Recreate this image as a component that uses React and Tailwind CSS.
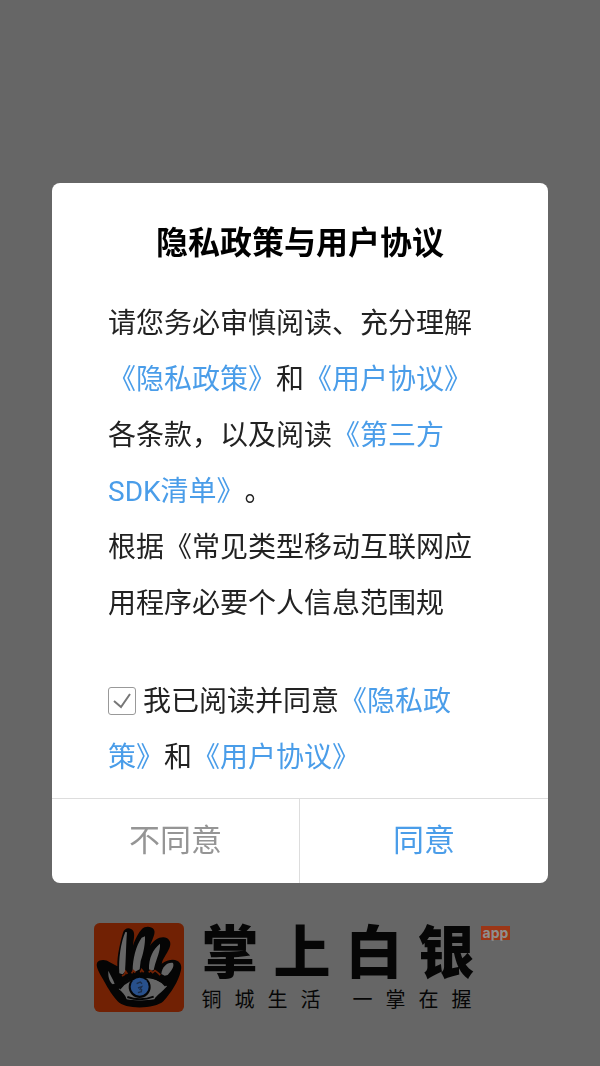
const cjk = "font-['Roboto','Noto_Sans_CJK_SC',sans-serif]";

function DocLink({ children }) {
  return (
    <a href="#" className="text-[#4a9de9]">
      {children}
    </a>
  );
}

function Spread({ text, className }) {
  return (
    <span className={className}>
      {Array.from(text).map((ch) => (
        <span key={ch}>{ch}</span>
      ))}
    </span>
  );
}

function HandLogo() {
  return (
    <svg viewBox="0 0 270 267" className="h-[89px] w-[90px] shrink-0" aria-hidden="true">
      <rect width="270" height="267" rx="17" fill="#712104" />
      <path
        d="M70 130C69 98 80 52 87 29C91 14 109 11 118 24C123 35 119 50 117 68C124 47 134 28 144 18C153 9 172 9 180 20C186 30 174 50 168 68C179 53 193 43 207 43C221 42 233 55 228 70C223 88 208 103 203 122C218 112 236 107 249 113C262 119 264 132 260 145C253 176 232 209 208 235C184 258 94 261 71 235C49 211 38 188 27 169C17 151 3 130 10 118C17 108 37 109 46 117Z"
        fill="#050505"
      />
      <g fill="#666">
        <path d="M76 151C73 107 81 56 94 27L99 28C96 63 96 109 93 146L86 154Z" />
        <path d="M116 143C116 107 126 68 143 44L153 40C154 62 148 93 140 114L137 139L121 148Z" />
        <path d="M165 138C164 106 177 78 198 62C200 83 187 108 182 129L179 141L170 144Z" />
        <path d="M202 153C204 132 220 117 237 120C242 131 231 145 221 156L212 158Z" />
        <path d="M43 143C50 158 57 169 62 182L56 184C45 175 42 160 43 143Z" />
        <path d="M74 198C93 172 113 163 139 163C171 163 198 173 219 190C204 207 187 218 181 229C153 234 118 233 98 229C94 216 85 207 74 198Z" />
      </g>
      <g fill="none" stroke="#050505">
        <path d="M76 197C112 151 185 151 216 188" strokeWidth="8" />
        <path d="M100 222Q139 236 179 221" strokeWidth="6" />
      </g>
      <circle cx="137" cy="192" r="33" fill="#050505" />
      <circle cx="137" cy="191" r="27" fill="#28508b" />
      <path
        d="M128 182L139 177L144 182M132 195L143 191L137 201M143 198L142 206L132 209"
        fill="none"
        stroke="#1c2d48"
        strokeWidth="4"
      />
      <g stroke="#712104" strokeWidth="5" fill="none">
        <path d="M84 159L92 154L95 145L100 153" />
        <path d="M113 151L118 143L124 149" />
        <path d="M139 148L143 140L149 148M164 148L170 143L176 149L183 143L191 149L199 156" />
      </g>
    </svg>
  );
}

export default function App() {
  return (
    <div className={`${cjk} bg-[#666] text-[#222]`}>
      <main className="flex min-h-screen flex-col items-center justify-end pb-[54px] pl-[4px]">
        <div className="flex items-end gap-[18px] text-[#060606]">
          <HandLogo />
          <div className="flex flex-col gap-[6px]">
            <div className="flex items-start gap-[6px]">
              <Spread text="掌上白银" className="flex gap-[15px] text-[57px] leading-[56px] font-black" />
              <span className="bg-[#9c3616] px-[2px] font-['Inter',sans-serif] text-[14px] leading-[14px] font-bold text-[#8f8f8f]">
                app
              </span>
            </div>
            <div className="flex gap-[32px] text-[20px] leading-[24px]">
              <Spread text="铜城生活" className="flex gap-[13px]" />
              <Spread text="一掌在握" className="flex gap-[13px]" />
            </div>
          </div>
        </div>
      </main>

      <div className="fixed inset-0 flex items-center justify-center px-[52px]">
        <section
          role="dialog"
          aria-labelledby="policy-title"
          className="w-full max-w-[640px] overflow-hidden rounded-[8px] bg-white [text-spacing-trim:space-all]"
        >
          <div className="px-[56px] pt-[36px] pb-[12px]">
            <h1 id="policy-title" className="text-center text-[32px] leading-[48px] font-bold text-black">
              隐私政策与用户协议
            </h1>
            <div className="mt-[29px] text-[28px] leading-[56px]">
              <p>
                请您务必审慎阅读、充分理解<DocLink>《隐私政策》</DocLink>和<DocLink>《用户协议》</DocLink>
                各条款，以及阅读<DocLink>《第三方SDK清单》</DocLink>。
              </p>
              <p>根据《常见类型移动互联网应用程序必要个人信息范围规</p>
            </div>
            <div className="mt-[42px] text-[28px] leading-[56px]">
              <span className="relative mr-[7px] inline-block size-[28px] align-[-4px]">
                <input
                  id="agree"
                  type="checkbox"
                  defaultChecked
                  className="peer block size-full appearance-none rounded-[3px] border border-[#999] bg-white"
                />
                <svg
                  viewBox="0 0 28 28"
                  className="pointer-events-none absolute inset-0 hidden peer-checked:block"
                  fill="none"
                  stroke="#777"
                  strokeWidth="2"
                  aria-hidden="true"
                >
                  <path d="M6 14L13 20L22 7" />
                </svg>
              </span>
              <label htmlFor="agree">我已阅读并同意</label>
              <DocLink>《隐私政策》</DocLink>和<DocLink>《用户协议》</DocLink>
            </div>
          </div>
          <div className="grid grid-cols-2 border-t border-[#ddd] text-[31px] leading-[84px]">
            <button type="button" className="border-r border-[#ddd] text-[#959595]">
              不同意
            </button>
            <button type="button" className="text-[#4a9de9]">
              同意
            </button>
          </div>
        </section>
      </div>
    </div>
  );
}
